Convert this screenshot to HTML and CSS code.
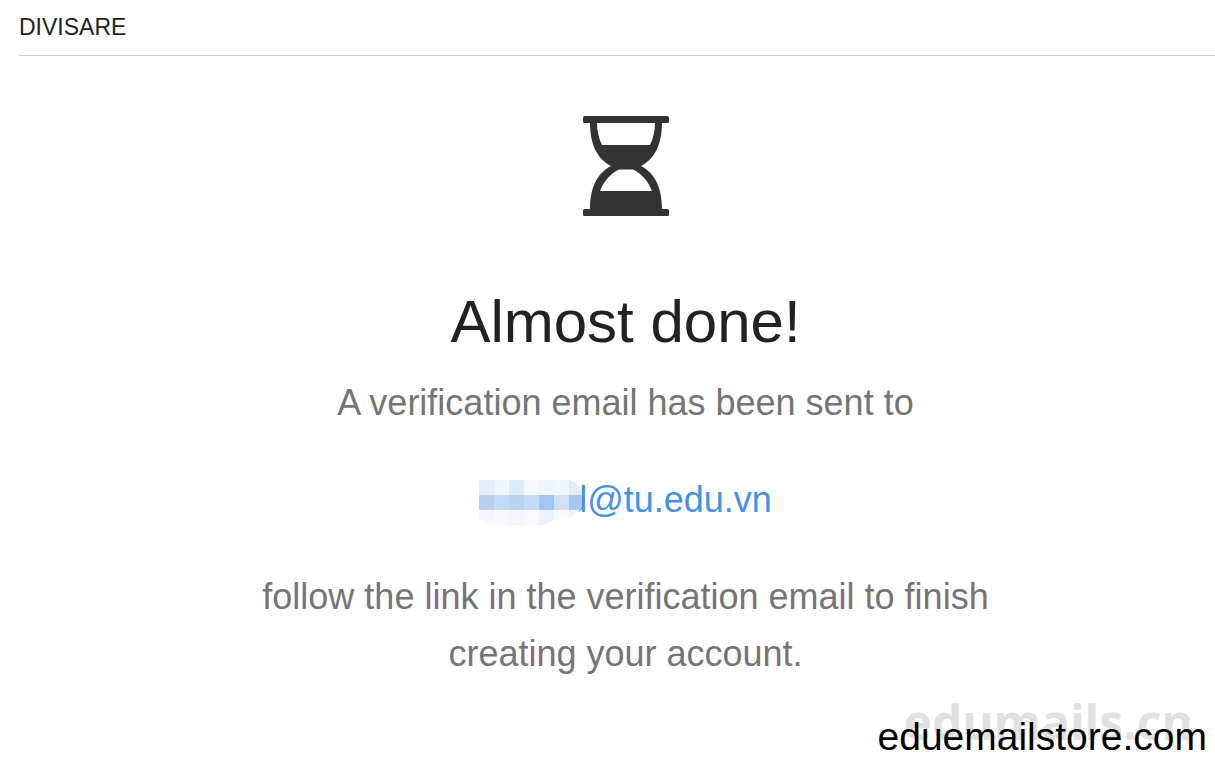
FILE: index.html
```
<!DOCTYPE html>
<html lang="en">
<head>
<meta charset="utf-8">
<title>Divisare</title>
<link rel="stylesheet" href="styles.css">
</head>
<body>
<header class="header">DIVISARE</header>
<main class="main">
<svg class="hourglass" viewBox="0 0 86 100" aria-hidden="true">
<rect x="0" y="0" width="86" height="7" rx="1.5"/>
<rect x="0" y="93" width="86" height="7" rx="1.5"/>
<path fill-rule="evenodd" d="M7 6H79C79 27 73 42 58 50C73 58 79 73 79 94H7C7 73 13 58 28 50C13 42 7 27 7 6ZM14 7C14 15 16 23 19 29H67C70 23 72 15 72 7ZM17 75H69C65 65 59 58 50 53.500H36C27 58 21 65 17 75Z"/>
</svg>
<h1 class="title">Almost done!</h1>
<p class="text">A verification email has been sent to</p>
<p class="text email">
<svg class="mosaic" viewBox="0 0 105 45" shape-rendering="crispEdges" aria-hidden="true">
<defs><clipPath id="blob"><path d="M0 0H91C97 2 101 7 103 14V25C101 31 97 35 91 37C82 37 76 39 66 45H16C10 43 7 40 0 39Z"/></clipPath></defs>
<g clip-path="url(#blob)">
<rect width="105" height="45" fill="#f7faff"/>
<rect width="15" height="15" fill="#e6edfa"/>
<rect x="15" width="15" height="15" fill="#f0f4fd"/>
<rect x="30" width="15" height="15" fill="#e0ebf8"/>
<rect x="45" width="15" height="15" fill="#f5f9fe"/>
<rect x="60" width="15" height="15" fill="#eef4fc"/>
<rect x="75" width="15" height="15" fill="#f2f5fd"/>
<rect x="90" width="15" height="15" fill="#e3ebf8"/>
<rect y="15" width="15" height="15" fill="#b9cff0"/>
<rect x="15" y="15" width="15" height="15" fill="#c5daf6"/>
<rect x="30" y="15" width="15" height="15" fill="#b8d3f3"/>
<rect x="45" y="15" width="15" height="15" fill="#c8dbf6"/>
<rect x="60" y="15" width="15" height="15" fill="#a4c5ef"/>
<rect x="75" y="15" width="15" height="15" fill="#d1e0f7"/>
<rect x="90" y="15" width="15" height="15" fill="#a9c6ee"/>
<rect y="30" width="15" height="15" fill="#f4f8fe"/>
<rect x="30" y="30" width="15" height="15" fill="#f4f8fd"/>
<rect x="60" y="30" width="15" height="15" fill="#ecf3fc"/>
<rect x="90" y="30" width="15" height="15" fill="#eef4fc"/>
</g>
</svg>
<span>d@tu.edu.vn</span>
</p>
<p class="text">follow the link in the verification email to finish creating your account.</p>
</main>
<div class="watermark">edumails.cn</div>
<div class="stamp">eduemailstore.com</div>
</body>
</html>
```
FILE: styles.css
```
body {
  margin: 0;
  min-height: 100vh;
  position: relative;
  background: #fff;
  color: #222;
  font-family: "Liberation Sans", Arial, sans-serif;
}
.header {
  margin-left: 19px;
  height: 55px;
  line-height: 55px;
  border-bottom: 1px solid #ccc;
  font-size: 23px;
}
.main {
  display: flex;
  flex-direction: column;
  align-items: center;
  padding: 60px 0 0 36px;
  text-align: center;
}
.hourglass {
  width: 86px;
  height: 100px;
  fill: #333;
}
.title {
  margin: 70px 0 16px;
  font-size: 60px;
  line-height: 72px;
  font-weight: 400;
}
.text {
  margin: 0 0 40px;
  max-width: 760px;
  font-size: 36px;
  line-height: 57px;
  color: #757575;
}
.email {
  display: flex;
  align-items: flex-end;
  color: #4a90e2;
}
.mosaic {
  z-index: 1;
  width: 105px;
  height: 45px;
  margin: 0 -17px 3px 0;
}
.watermark {
  position: absolute;
  right: 22px;
  bottom: 14px;
  color: #e1e1e1;
  font: 700 48px/56px "Open Sans", "Noto Sans", sans-serif;
}
.stamp {
  position: absolute;
  right: 8px;
  bottom: 4px;
  color: #000;
  font-size: 39px;
  line-height: 46px;
}
```
